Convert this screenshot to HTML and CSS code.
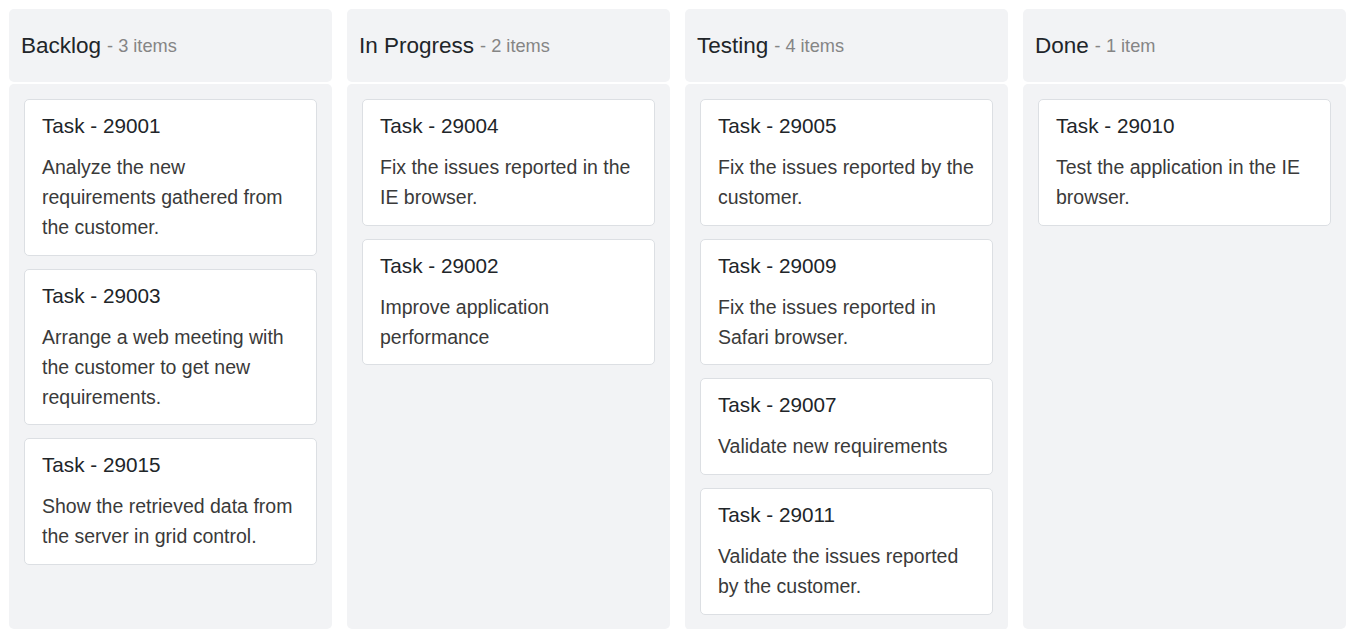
FILE: index.html
```html
<!DOCTYPE html>
<html lang="en">
<head>
<meta charset="utf-8">
<title>Kanban</title>
<link rel="stylesheet" href="styles.css">
</head>
<body>
<div class="board">
  <section class="column">
    <header class="col-header"><span class="col-title">Backlog</span><span class="col-count">- 3 items</span></header>
    <div class="col-body">
      <div class="card"><div class="card-title">Task - 29001</div><div class="card-text">Analyze the new requirements gathered from the customer.</div></div>
      <div class="card"><div class="card-title">Task - 29003</div><div class="card-text">Arrange a web meeting with the customer to get new requirements.</div></div>
      <div class="card"><div class="card-title">Task - 29015</div><div class="card-text">Show the retrieved data from the server in grid control.</div></div>
    </div>
  </section>
  <section class="column">
    <header class="col-header"><span class="col-title">In Progress</span><span class="col-count">- 2 items</span></header>
    <div class="col-body">
      <div class="card"><div class="card-title">Task - 29004</div><div class="card-text">Fix the issues reported in the IE browser.</div></div>
      <div class="card"><div class="card-title">Task - 29002</div><div class="card-text">Improve application performance</div></div>
    </div>
  </section>
  <section class="column">
    <header class="col-header"><span class="col-title">Testing</span><span class="col-count">- 4 items</span></header>
    <div class="col-body">
      <div class="card"><div class="card-title">Task - 29005</div><div class="card-text">Fix the issues reported by the customer.</div></div>
      <div class="card"><div class="card-title">Task - 29009</div><div class="card-text">Fix the issues reported in Safari browser.</div></div>
      <div class="card"><div class="card-title">Task - 29007</div><div class="card-text">Validate new requirements</div></div>
      <div class="card"><div class="card-title">Task - 29011</div><div class="card-text">Validate the issues reported by the customer.</div></div>
    </div>
  </section>
  <section class="column">
    <header class="col-header"><span class="col-title">Done</span><span class="col-count">- 1 item</span></header>
    <div class="col-body">
      <div class="card"><div class="card-title">Task - 29010</div><div class="card-text">Test the application in the IE browser.</div></div>
    </div>
  </section>
</div>
</body>
</html>
```

FILE: styles.css
```css
* { box-sizing: border-box; }
html, body { margin: 0; padding: 0; background: #fff; }
body {
  font-family: "Liberation Sans", Arial, sans-serif;
  color: #212529;
}
.board {
  display: grid;
  grid-template-columns: repeat(4, 323px);
  column-gap: 15px;
  padding: 9px 0 0 9px;
  height: 629px;
}
.column {
  display: flex;
  flex-direction: column;
  gap: 2px;
  min-height: 0;
}
.col-header {
  height: 73px;
  flex: none;
  background: #f2f3f5;
  border-radius: 5px;
  display: flex;
  align-items: center;
  padding: 0 12px 0 12px;
}
.col-title {
  font-size: 22.5px;
  color: #212529;
}
.col-count {
  font-size: 18.2px;
  color: #858585;
  margin-left: 6px;
  margin-top: 2px;
}
.col-body {
  flex: 1;
  background: #f2f3f5;
  border-radius: 5px;
  padding: 15px 15px 15px 15px;
  display: flex;
  flex-direction: column;
  gap: 13px;
}
.card {
  background: #fff;
  border: 1px solid #dcdfe3;
  border-radius: 5px;
  padding: 14px 16px 12.7px 17px;
}
.card-title {
  font-size: 20.7px;
  line-height: 24px;
  color: #212529;
  margin-bottom: 14px;
}
.card-text {
  font-size: 19.5px;
  line-height: 30px;
  color: #3a3a3a;
}
```
